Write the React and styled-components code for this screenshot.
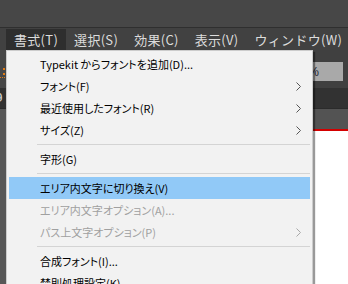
import React from 'react';
import styled, { createGlobalStyle } from 'styled-components';

const GlobalStyle = createGlobalStyle`
  html, body {
    margin: 0;
    padding: 0;
    background: #474747;
  }
  body {
    font-family: "Noto Sans CJK JP", "Noto Sans", sans-serif;
  }
`;

const Screen = styled.div`
  position: relative;
  display: flex;
  flex-direction: column;
  width: 348px;
  height: 284px;
  overflow: hidden;
`;

const TopStrip = styled.div`
  height: 27px;
  background: #474747;
  border-bottom: 1px solid #2f2f2f;
`;

const MenuBar = styled.div`
  display: flex;
  height: 22px;
  padding-left: 6px;
  background: #414141;
  overflow: hidden;
`;

const MenuTitle = styled.div`
  display: flex;
  flex-shrink: 0;
  align-items: center;
  padding: 0 8px;
  margin-top: 1px;
  font-size: 13px;
  letter-spacing: 0.3px;
  white-space: nowrap;
  color: #dcdcdc;
  background: ${p => (p.open ? '#2e2e2e' : 'transparent')};
`;

const Workspace = styled.div`
  flex: 1;
  display: flex;
  flex-direction: column;
`;

const ControlBar = styled.div`
  display: flex;
  justify-content: space-between;
  height: 38px;
  background: #404040;
`;

const Grip = styled.div`
  width: 6px;
  background: #474747;
`;

const PercentField = styled.div`
  display: flex;
  justify-content: flex-end;
  align-items: center;
  width: 40px;
  height: 19px;
  margin: 12px 5px 0 0;
  padding-right: 24px;
  background: #a9a9a9;
  font-family: "Liberation Sans", sans-serif;
  font-size: 12px;
  color: #1c2430;
`;

const TabBar = styled.div`
  height: 20px;
  background: #323232;
  overflow: hidden;
`;

const TabLabel = styled.span`
  display: block;
  margin-left: -5px;
  font-family: "DejaVu Sans Mono", monospace;
  font-size: 13px;
  line-height: 20px;
  color: #d0d0d0;
`;

const Body = styled.div`
  flex: 1;
  display: flex;
  border-top: 1px solid #2b2b2b;
`;

const ToolDock = styled.div`
  width: 120px;
  background: #575757;
`;

const DocPane = styled.div`
  flex: 1;
  display: flex;
  flex-direction: column;
`;

const Ruler = styled.div`
  height: 20px;
  background: #535353;
  border-bottom: 2px solid #d40000;
`;

const Page = styled.div`
  flex: 1;
  background: #ffffff;
`;

const Dropdown = styled.div`
  position: absolute;
  top: 50px;
  left: 6px;
  width: 301px;
  padding: 2px;
  background: #f2f2f2;
  border: 1px solid #cccccc;
  box-shadow: 2px 2px 1px rgba(0, 0, 0, 0.4);
`;

const Item = styled.div`
  display: flex;
  align-items: center;
  justify-content: space-between;
  height: 22px;
  padding: 0 9px 0 31px;
  font-size: 11px;
  font-feature-settings: "palt";
  color: ${p => (p.disabled ? '#a0a0a0' : '#000000')};
  background: ${p => (p.active ? '#91c9f7' : 'transparent')};
  white-space: nowrap;
`;

const Separator = styled.div`
  height: 1px;
  margin: 3px 0 3px 28px;
  background: #d4d4d4;
`;

const Chevron = ({ disabled }) => (
  <svg width="5" height="9" viewBox="0 0 5 9">
    <polyline
      points="0.5,0.5 4.5,4.5 0.5,8.5"
      fill="none"
      stroke={disabled ? '#a8a8a8' : '#555555'}
      strokeWidth="1"
    />
  </svg>
);

const GripDots = () => (
  <svg width="6" height="38" viewBox="0 0 6 38">
    <rect x="3" y="18" width="2" height="2" fill="#e07c16" />
    <rect x="3" y="23" width="2" height="2" fill="#e07c16" />
    <rect x="0" y="27" width="1" height="1" fill="#e07c16" />
    <rect x="2" y="27" width="1" height="1" fill="#e07c16" />
    <rect x="4" y="27" width="1" height="1" fill="#e07c16" />
  </svg>
);

const titles = ['書式(T)', '選択(S)', '効果(C)', '表示(V)', 'ウィンドウ(W)'];

const items = [
  { label: 'Typekit からフォントを追加(D)...' },
  { label: 'フォント(F)', sub: true },
  { label: '最近使用したフォント(R)', sub: true },
  { label: 'サイズ(Z)', sub: true },
  { sep: true },
  { label: '字形(G)' },
  { sep: true },
  { label: 'エリア内文字に切り換え(V)', active: true },
  { label: 'エリア内文字オプション(A)...', disabled: true },
  { label: 'パス上文字オプション(P)', disabled: true, sub: true },
  { sep: true },
  { label: '合成フォント(I)...' },
  { label: '禁則処理設定(K)...' },
];

export default function App() {
  return (
    <Screen>
      <GlobalStyle />
      <TopStrip />
      <MenuBar>
        {titles.map((t, i) => (
          <MenuTitle key={t} open={i === 0}>{t}</MenuTitle>
        ))}
      </MenuBar>
      <Workspace>
        <ControlBar>
          <Grip>
            <GripDots />
          </Grip>
          <PercentField>%</PercentField>
        </ControlBar>
        <TabBar>
          <TabLabel>9</TabLabel>
        </TabBar>
        <Body>
          <ToolDock />
          <DocPane>
            <Ruler />
            <Page />
          </DocPane>
        </Body>
      </Workspace>
      <Dropdown>
        {items.map((it, i) =>
          it.sep ? (
            <Separator key={i} />
          ) : (
            <Item key={i} active={it.active} disabled={it.disabled}>
              <span>{it.label}</span>
              {it.sub && <Chevron disabled={it.disabled} />}
            </Item>
          )
        )}
      </Dropdown>
    </Screen>
  );
}
